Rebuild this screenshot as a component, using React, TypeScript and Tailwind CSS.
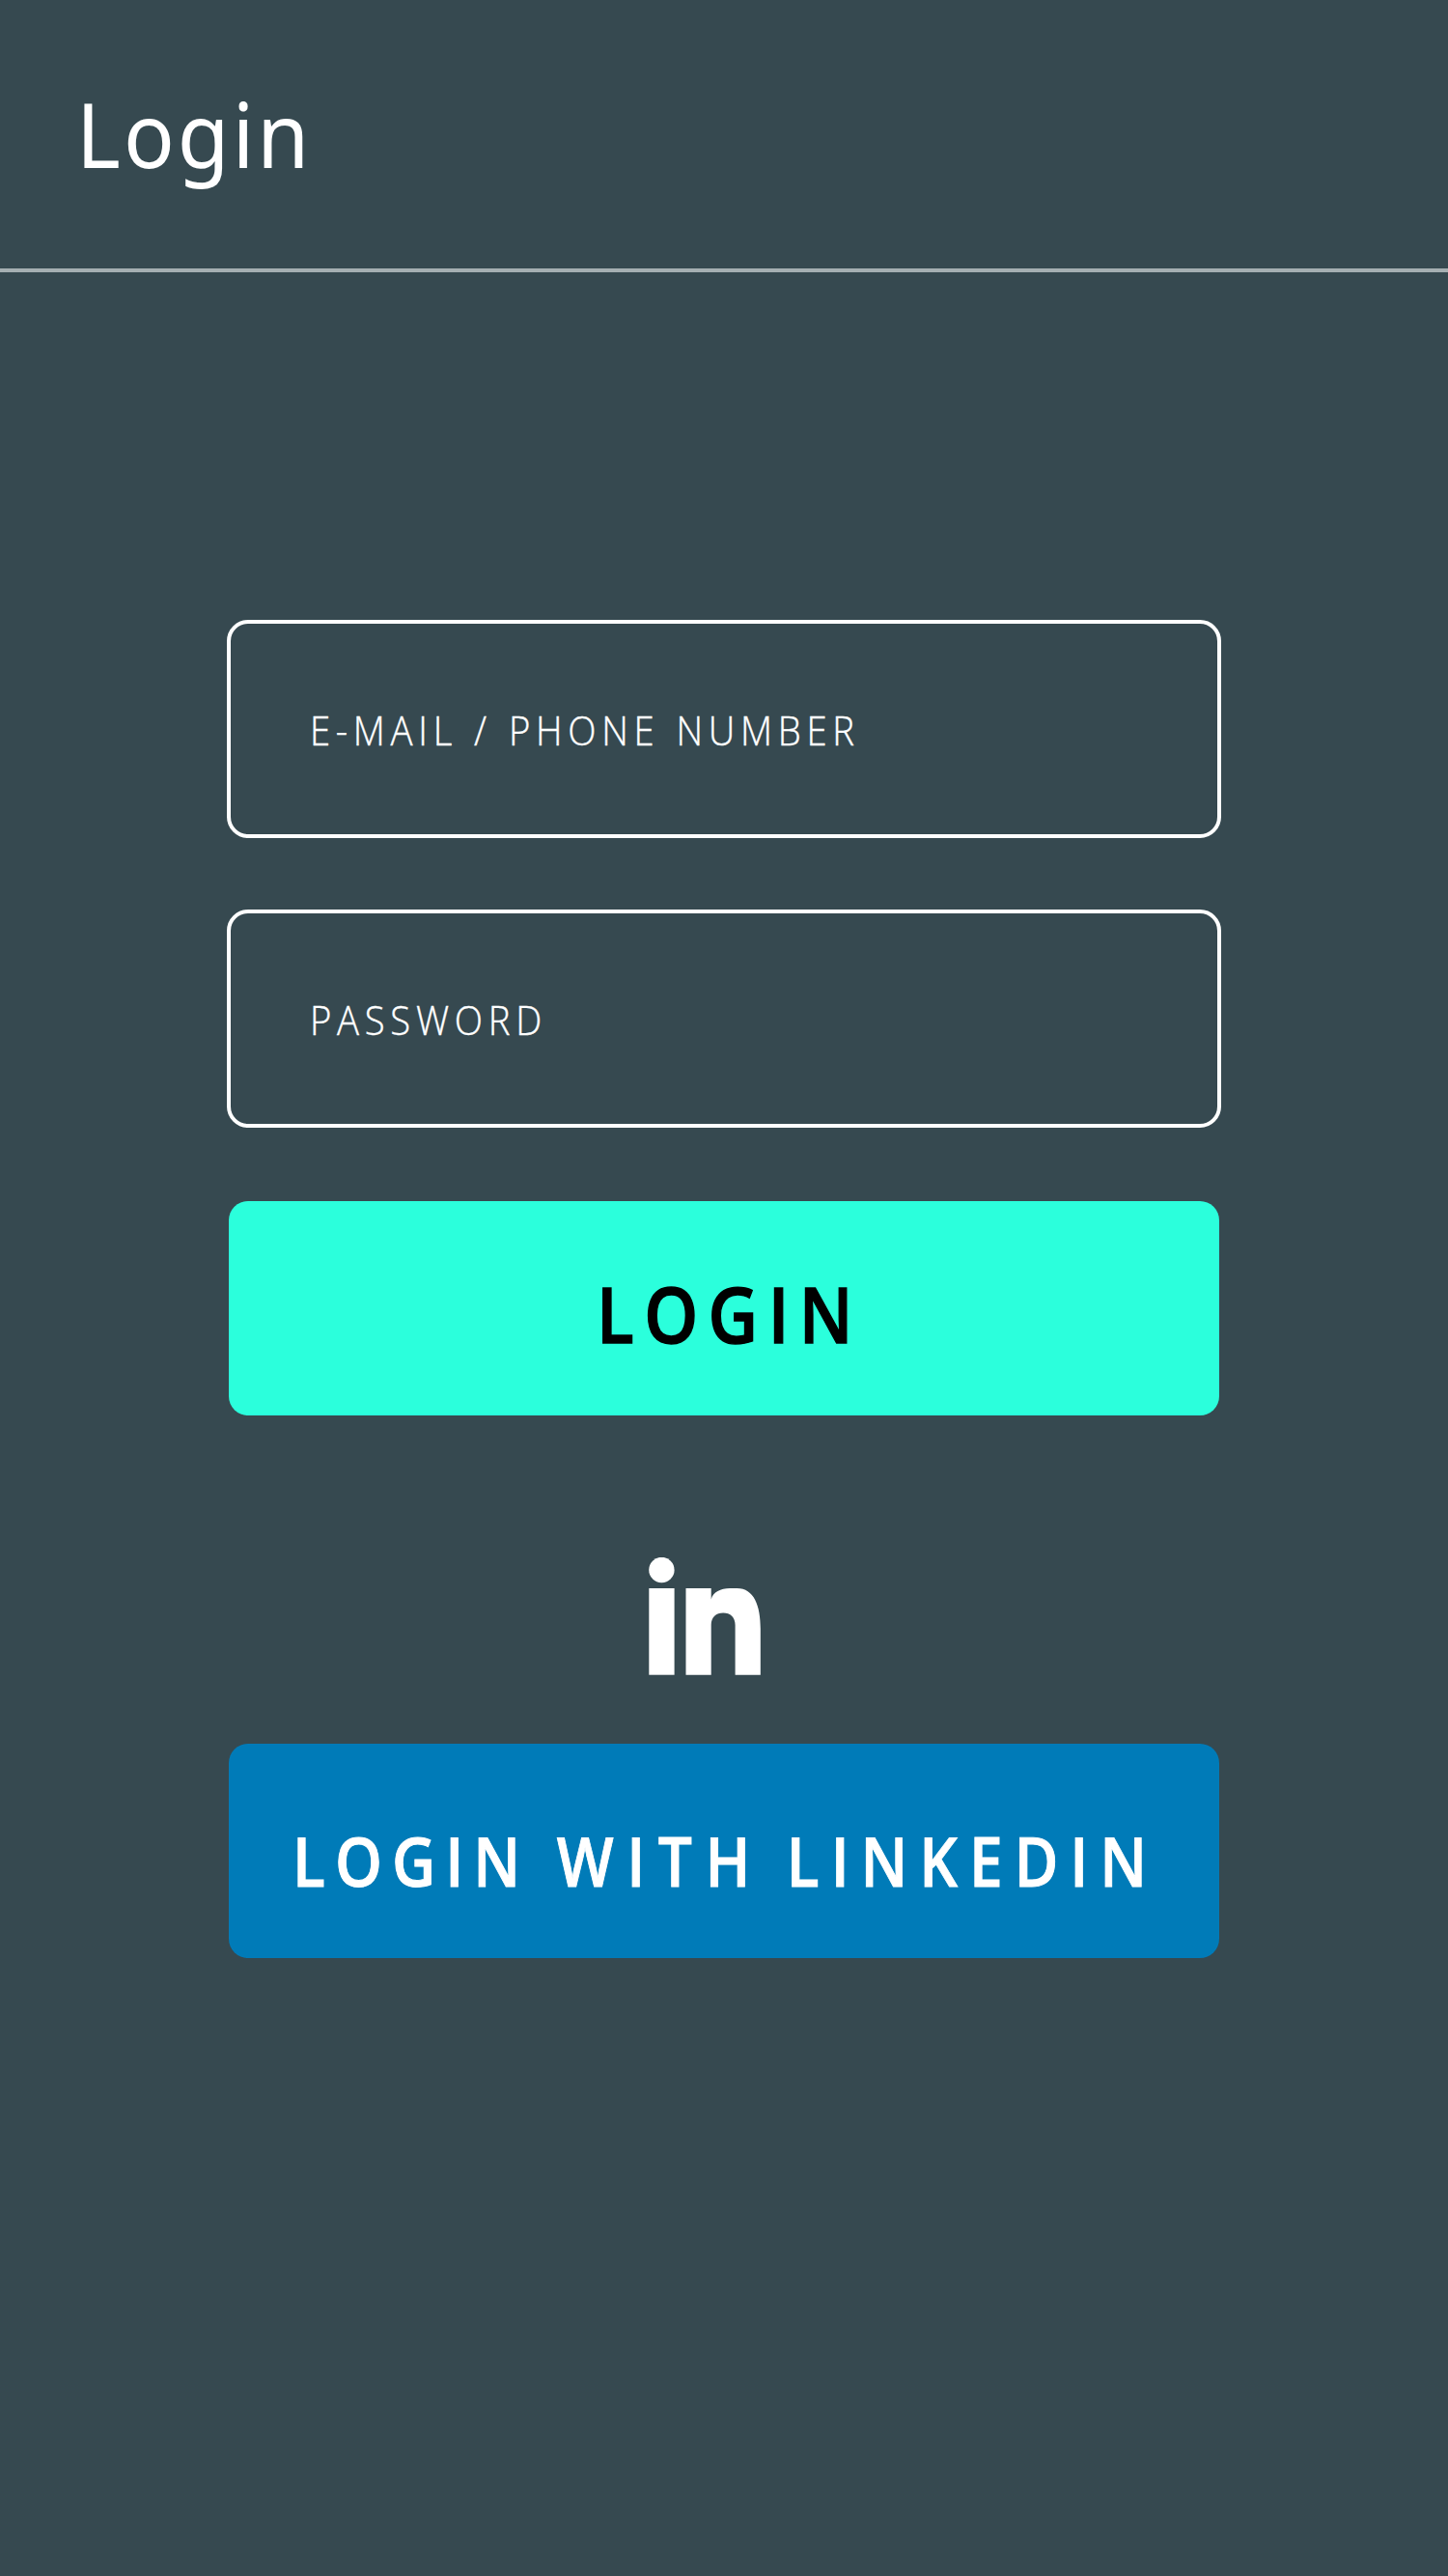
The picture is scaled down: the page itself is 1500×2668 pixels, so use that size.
const LinkedInMark = () => (
  <svg width="117" height="122" viewBox="0 0 117 122" fill="#ffffff" aria-label="LinkedIn">
    <circle cx="13.4" cy="13" r="13.2" />
    <rect x="0.3" y="32" width="26.3" height="89.7" />
    <path d="M38.5 32H64.7V43.5C66.5 36 74.5 32 84 32H91.5C109 32 115.8 50 115.8 74V121.7H89.6V70C89.6 62 84.5 57.5 77.2 57.5C69.8 57.5 64.7 62 64.7 70V121.7H38.5Z" />
  </svg>
);

const Field = ({ label }: { label: string }) => (
  <div className="w-[1030px] h-[226px] flex items-center border-4 border-white rounded-[22px] pl-[81.5px] pt-px">
    <span className="origin-left scale-x-[0.91] text-[42px] leading-none font-light tracking-[6.3px] [word-spacing:1.6px] whitespace-nowrap [-webkit-text-stroke:0.4px_white]">{label}</span>
  </div>
);

export default function App() {
  return (
    <div className="w-[1500px] h-[2668px] bg-[#364950] text-white font-['Open_Sans',sans-serif] overflow-hidden">
      <header className="h-[282px] flex items-center border-b-4 border-[#a5afb2] pl-[79px] pb-[3px]">
        <h1 className="origin-left scale-x-[0.93] font-['Noto_Sans',sans-serif] text-[94px] leading-none tracking-[3.3px]">Login</h1>
      </header>

      <main className="flex flex-col items-center gap-[74px] pt-[360px]">
        <Field label="E-MAIL / PHONE NUMBER" />
        <Field label="PASSWORD" />

        <button className="mt-[1.5px] w-[1026px] h-[222.5px] flex items-center justify-center rounded-[20px] bg-[#2bffdc] text-black pt-[10px] pl-[12px]">
          <span className="scale-x-[0.89] text-[80px] leading-none font-semibold tracking-[11.7px] [-webkit-text-stroke:1.4px_black]">LOGIN</span>
        </button>

        <div className="mt-[73px] w-[1026px] flex flex-col gap-[71px]">
          <div className="pl-[435px]">
            <LinkedInMark />
          </div>
          <button className="h-[222px] flex items-center rounded-[20px] bg-[#007bb8] pt-[20px] pl-[66px]">
            <span className="flex origin-left scale-x-[0.89] text-[70px] leading-none font-semibold [-webkit-text-stroke:0.9px_white]">
              <span className="tracking-[11.3px] mr-[31px]">LOGIN</span>
              <span className="tracking-[15.2px] mr-[27px]">WITH</span>
              <span className="tracking-[13.4px]">LINKEDIN</span>
            </span>
          </button>
        </div>
      </main>
    </div>
  );
}
